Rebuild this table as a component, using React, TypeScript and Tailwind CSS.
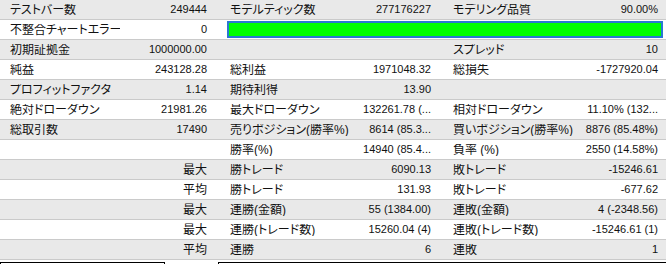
import React from 'react'

type Row = [string, string, string, string, string, string]

const rows: Row[] = [
  ['テストバー数', '249444', 'モデルティック数', '277176227', 'モデリング品質', '90.00%'],
  ['不整合チャートエラー', '0', '', '', '', ''],
  ['初期証拠金', '1000000.00', '', '', 'スプレッド', '10'],
  ['純益', '243128.28', '総利益', '1971048.32', '総損失', '-1727920.04'],
  ['プロフィットファクタ', '1.14', '期待利得', '13.90', '', ''],
  ['絶対ドローダウン', '21981.26', '最大ドローダウン', '132261.78 (...', '相対ドローダウン', '11.10% (132...'],
  ['総取引数', '17490', '売りポジション(勝率%)', '8614 (85.3...', '買いポジション(勝率%)', '8876 (85.48%)'],
  ['', '', '勝率(%)', '14940 (85.4...', '負率 (%)', '2550 (14.58%)'],
  ['', '最大', '勝トレード', '6090.13', '敗トレード', '-15246.61'],
  ['', '平均', '勝トレード', '131.93', '敗トレード', '-677.62'],
  ['', '最大', '連勝(金額)', '55 (1384.00)', '連敗(金額)', '4 (-2348.56)'],
  ['', '最大', '連勝(トレード数)', '15260.04 (4)', '連敗(トレード数)', '-15246.61 (1)'],
  ['', '平均', '連勝', '6', '連敗', '1'],
]

const label = 'whitespace-nowrap overflow-hidden text-[12px]'
const value = 'whitespace-nowrap overflow-hidden text-right text-[11px]'

const ReportRow: React.FC<{ row: Row; index: number }> = ({ row, index }) => {
  const [l1, v1, l2, v2, l3, v3] = row
  const bg = index % 2 === 0 ? 'bg-[#e9e9e9]' : 'bg-white'
  const v1Class = /^[0-9.-]/.test(v1) ? value : 'whitespace-nowrap text-right text-[12px]'
  return (
    <div
      className={`grid grid-cols-[120px_102px_128px_94px_136px_86px] h-[20px] items-center border-b border-[#cacaca] ${bg}`}
    >
      <div className={`${label} pl-[10px]`}>{l1}</div>
      <div className={`${v1Class} pr-[15px]`}>{v1}</div>
      {index === 1 ? (
        <div className="col-span-4 pl-[5px] pr-[3px]">
          <div className="h-[17px] bg-[#00ff00] border-2 border-[#2a78d2]" />
        </div>
      ) : (
        <>
          <div className={`${label} pl-[8px]`}>{l2}</div>
          <div className={`${value} pr-[13px]`}>{v2}</div>
          <div className={`${label} pl-[9px]`}>{l3}</div>
          <div className={`${value} pr-[8px]`}>{v3}</div>
        </>
      )}
    </div>
  )
}

const App: React.FC = () => {
  return (
    <div className="w-[666px] h-[264px] overflow-hidden bg-white text-[#111] font-['Liberation_Sans','Noto_Sans_CJK_JP',sans-serif] [font-feature-settings:'palt'] leading-none">
      {rows.map((row, i) => (
        <ReportRow key={i} row={row} index={i} />
      ))}
      <div className="flex mt-[2px]">
        <div className="w-[165px] h-[6px] border-t border-l border-r border-black" />
        <div className="w-[53px]" />
        <div className="flex-1 h-[6px] border-t border-l border-black" />
      </div>
    </div>
  )
}

export default App
